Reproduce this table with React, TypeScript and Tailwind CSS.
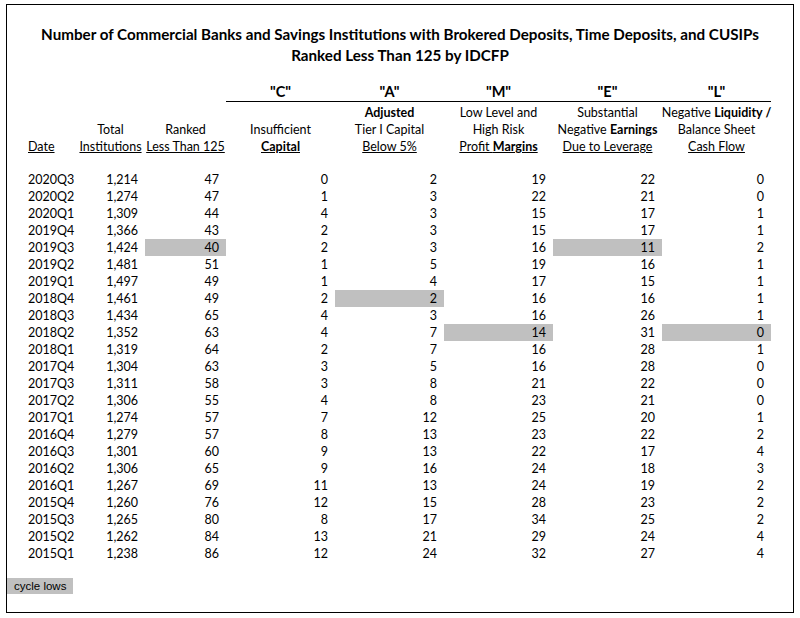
import React from 'react';

type Row = [string, string, number, number, number, number, number, number];

const rows: Row[] = [
  ['2020Q3', '1,214', 47, 0, 2, 19, 22, 0],
  ['2020Q2', '1,274', 47, 1, 3, 22, 21, 0],
  ['2020Q1', '1,309', 44, 4, 3, 15, 17, 1],
  ['2019Q4', '1,366', 43, 2, 3, 15, 17, 1],
  ['2019Q3', '1,424', 40, 2, 3, 16, 11, 2],
  ['2019Q2', '1,481', 51, 1, 5, 19, 16, 1],
  ['2019Q1', '1,497', 49, 1, 4, 17, 15, 1],
  ['2018Q4', '1,461', 49, 2, 2, 16, 16, 1],
  ['2018Q3', '1,434', 65, 4, 3, 16, 26, 1],
  ['2018Q2', '1,352', 63, 4, 7, 14, 31, 0],
  ['2018Q1', '1,319', 64, 2, 7, 16, 28, 1],
  ['2017Q4', '1,304', 63, 3, 5, 16, 28, 0],
  ['2017Q3', '1,311', 58, 3, 8, 21, 22, 0],
  ['2017Q2', '1,306', 55, 4, 8, 23, 21, 0],
  ['2017Q1', '1,274', 57, 7, 12, 25, 20, 1],
  ['2016Q4', '1,279', 57, 8, 13, 23, 22, 2],
  ['2016Q3', '1,301', 60, 9, 13, 22, 17, 4],
  ['2016Q2', '1,306', 65, 9, 16, 24, 18, 3],
  ['2016Q1', '1,267', 69, 11, 13, 24, 19, 2],
  ['2015Q4', '1,260', 76, 12, 15, 28, 23, 2],
  ['2015Q3', '1,265', 80, 8, 17, 34, 25, 2],
  ['2015Q2', '1,262', 84, 13, 21, 29, 24, 4],
  ['2015Q1', '1,238', 86, 12, 24, 32, 27, 4],
];

// cycle lows: date -> highlighted column indexes
const lows: Record<string, number[]> = {
  '2019Q3': [2, 6],
  '2018Q4': [4],
  '2018Q2': [5, 7],
};

const cols = 'grid grid-cols-[69px_69px_81px_109px_109px_109px_109px_109px]';

const App: React.FC = () => {
  return (
    <div className="w-[800px] h-[618px] bg-white text-black font-['Lato',sans-serif]">
      <div className="ml-[6px] mt-[4px] w-[788px] h-[609px] border border-black flex flex-col">
        <div className="pt-[19px] text-center font-bold text-[15.2px] leading-[21px]">
          <div>Number of Commercial Banks and Savings Institutions with Brokered Deposits, Time Deposits, and CUSIPs</div>
          <div>Ranked Less Than 125 by IDCFP</div>
        </div>

        <div className="mt-[16px] text-[12.5px]">
          <div className={cols}>
            <div className="col-span-3" />
            <div className="col-span-5 grid grid-cols-5 border-b border-black font-bold text-[14.5px] h-[20px] leading-[19px] text-center">
              <span>"C"</span>
              <span>"A"</span>
              <span>"M"</span>
              <span>"E"</span>
              <span>"L"</span>
            </div>
          </div>

          <div className={`${cols} pt-[2px] leading-[17px] text-center whitespace-nowrap`}>
            <div className="flex flex-col h-[51px] justify-end items-start pl-[21px]">
              <span className="underline">Date</span>
            </div>
            <div className="flex flex-col h-[51px] justify-end">
              <span>Total</span>
              <span className="underline">Institutions</span>
            </div>
            <div className="flex flex-col h-[51px] justify-end">
              <span>Ranked</span>
              <span className="underline">Less Than 125</span>
            </div>
            <div className="flex flex-col h-[51px] justify-end">
              <span>Insufficient</span>
              <span className="underline font-bold">Capital</span>
            </div>
            <div className="flex flex-col h-[51px] justify-end">
              <span className="font-bold">Adjusted</span>
              <span>Tier I Capital</span>
              <span className="underline">Below 5%</span>
            </div>
            <div className="flex flex-col h-[51px] justify-end">
              <span>Low Level and</span>
              <span>High Risk</span>
              <span className="underline">Profit <b>Margins</b></span>
            </div>
            <div className="flex flex-col h-[51px] justify-end">
              <span>Substantial</span>
              <span>Negative <b>Earnings</b></span>
              <span className="underline">Due to Leverage</span>
            </div>
            <div className="flex flex-col h-[51px] justify-end items-center">
              <span>Negative <b>Liquidity /</b></span>
              <span>Balance Sheet</span>
              <span className="underline">Cash Flow</span>
            </div>
          </div>

          <div className="mt-[16px] leading-[17px]">
            {rows.map((r) => (
              <div key={r[0]} className={`${cols} h-[17px]`}>
                <span className="pl-[21px]">{r[0]}</span>
                {r.slice(1).map((v, i) => (
                  <span
                    key={i}
                    className={`text-right pr-[7px] ${lows[r[0]]?.includes(i + 1) ? 'bg-[#c0c0c0]' : ''}`}
                  >
                    {v}
                  </span>
                ))}
              </div>
            ))}
          </div>
        </div>

        <div className="mt-[16px] w-[66px] h-[16px] bg-[#c0c0c0] font-['Liberation_Sans',sans-serif] text-[11.5px] leading-[16px] pl-[7px]">
          cycle lows
        </div>
      </div>
    </div>
  );
};

export default App;
